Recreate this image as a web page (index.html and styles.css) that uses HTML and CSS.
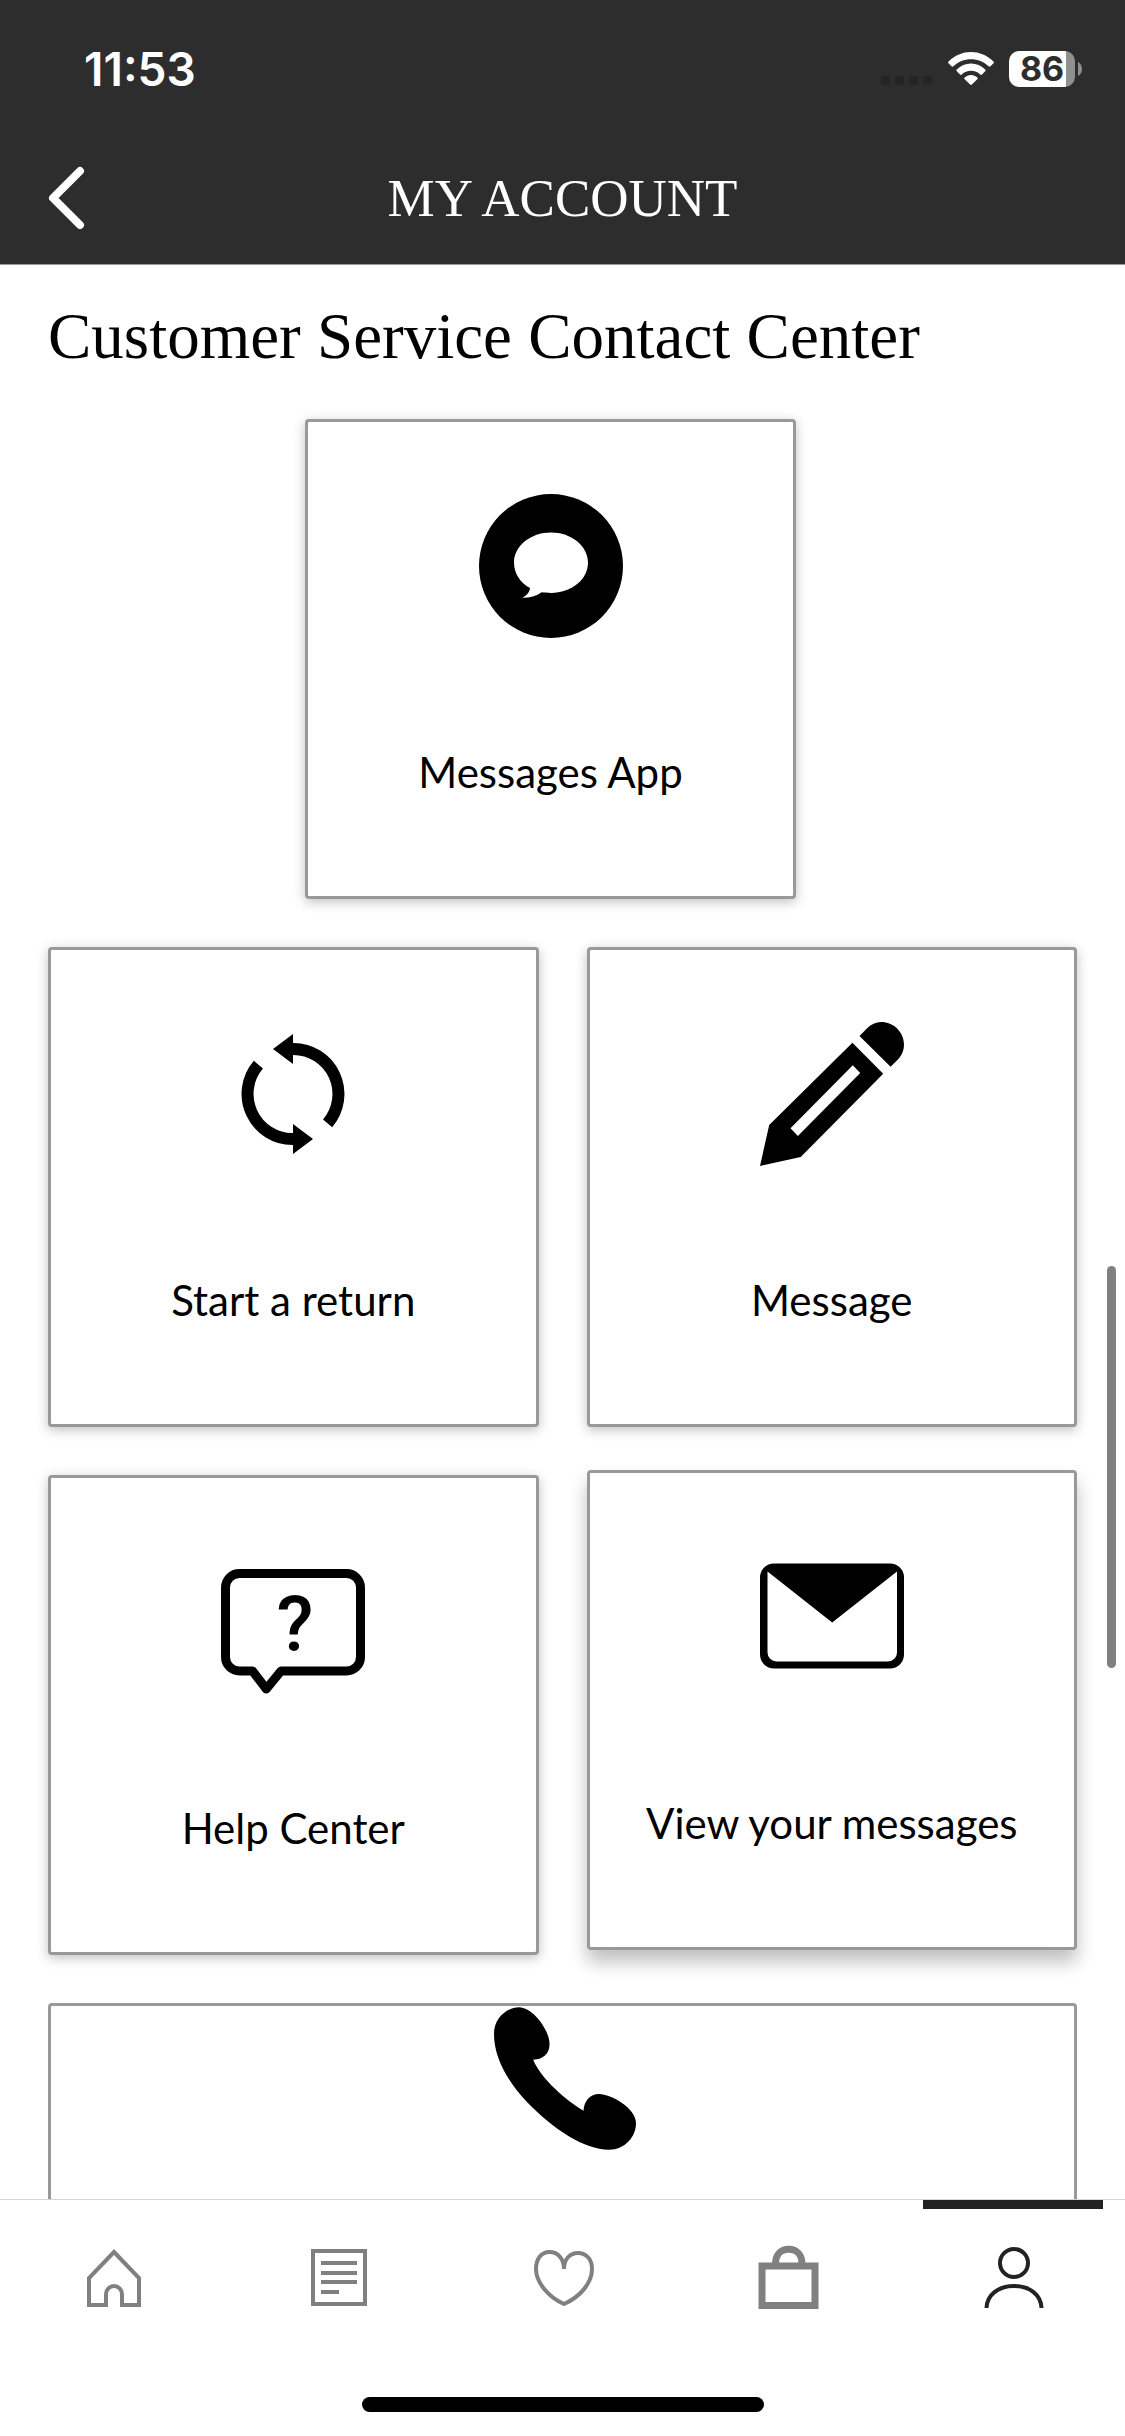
FILE: index.html
```html
<!DOCTYPE html>
<html lang="en">
<head>
    <meta charset="UTF-8">
    <meta name="viewport" content="width=device-width, initial-scale=1.0">
    <title>My Account</title>
    <link rel="stylesheet" href="styles.css">
</head>
<body>
    <header class="header">
        <div class="status-bar">
            <span class="time">11:53</span>
            <div class="status-icons">
                <svg class="signal" viewBox="0 0 52 10" fill="#242424">
                    <rect x="0" width="9" height="9" rx="3"/>
                    <rect x="14" width="9" height="9" rx="3"/>
                    <rect x="28" width="9" height="9" rx="3"/>
                    <rect x="42" width="9" height="9" rx="3"/>
                </svg>
                <svg class="wifi" viewBox="0 0 46 34" fill="#fff">
                    <path d="M.6 9.4C6.700 3.400 14.500 0 23 0s16.300 3.400 22.400 9.400c.7.700.7 1.300.1 1.900l-3 3c-.6.600-1.300.600-1.900 0C35.800 9.800 29.700 7.200 23 7.200S10.200 9.800 5.400 14.300c-.6.600-1.300.600-1.900 0l-3-3c-.6-.6-.6-1.200.1-1.900z"/>
                    <path d="M8.800 17.500C12.600 13.800 17.600 11.600 23 11.600s10.400 2.200 14.200 5.900c.6.600.6 1.200 0 1.800l-3.200 3.200c-.6.600-1.200.6-1.800 0-2.400-2.400-5.600-3.700-9.200-3.700s-6.800 1.300-9.200 3.700c-.6.600-1.200.6-1.800 0l-3.200-3.200c-.6-.6-.6-1.200 0-1.800z"/>
                    <path d="M16.700 25.500c1.700-1.600 3.900-2.500 6.300-2.500s4.600.9 6.300 2.500c.6.600.6 1.200 0 1.700l-5.400 5.400c-.6.600-1.200.6-1.800 0l-5.400-5.400c-.6-.6-.6-1.200 0-1.700z"/>
                </svg>
                <div class="battery">
                    <span class="battery-level">86</span>
                    <svg class="battery-nub" viewBox="0 0 4 14" fill="#8f8f8f"><path d="M0 0c2 1 4 3.500 4 7s-2 6-4 7z"/></svg>
                </div>
            </div>
        </div>
        <div class="title-bar">
            <button class="back" type="button" aria-label="Back">
                <svg viewBox="0 0 36 62" fill="none" stroke="#fff" stroke-width="8" stroke-linecap="round" stroke-linejoin="round"><path d="M32 4L5 31l27 27"/></svg>
            </button>
            <h1 class="title">MY ACCOUNT</h1>
        </div>
    </header>

    <main class="content">
        <h2 class="heading">Customer Service Contact Center</h2>
        <div class="cards">
            <a class="card card-first" href="#">
                <svg class="card-icon" viewBox="0 0 144 144">
                    <circle cx="72" cy="72" r="72"/>
                    <path fill="#fff" d="M72 38.500c20.500 0 37 13.500 37 30.200s-16.500 30.200-37 30.200c-3.500 0-6.500-.1-9.300-.6-5.700 4-12.500 5.700-19.500 5.500 4-2 7.500-5.500 7.800-9.800C41.500 89 35 79.500 35 68.700 35 52 51.500 38.500 72 38.500z"/>
                </svg>
                <span class="card-label">Messages App</span>
            </a>
            <a class="card" href="#">
                <svg class="card-icon" viewBox="0 0 144 144">
                    <g fill="none" stroke="#000" stroke-width="12">
                        <path d="M71 27h1a45 45 0 0 1 34.600 74.300"/>
                        <path d="M73 117h-1a45 45 0 0 1-34.600-74.300"/>
                    </g>
                    <path d="M52 27l20-15v30zM92 117l-20-15v30z"/>
                </svg>
                <span class="card-label">Start a return</span>
            </a>
            <a class="card" href="#">
                <svg class="card-icon" viewBox="0 0 144 144">
                    <path fill-rule="evenodd" d="M0 144l9.200-41L92.400 20.700l30.800 31L40.700 135zM92.800 43.300l-62.300 63 7.400 7.700 62.300-63z"/>
                    <path d="M99.500 14l7.100-7.300C111 2.300 116 0 121 0c12.500 0 23 10 23 22.500 0 6-2.500 11.500-6.600 15.500l-6.800 6.700z"/>
                </svg>
                <span class="card-label">Message</span>
            </a>
            <a class="card" href="#">
                <svg class="card-icon" viewBox="0 0 144 144">
                    <path fill="none" stroke="#000" stroke-width="9" stroke-linejoin="round" d="M18.500 23.500h107a14 14 0 0 1 14 14V107a14 14 0 0 1-14 14H60L45.300 139 31.500 121h-13a14 14 0 0 1-14-14V37.500a14 14 0 0 1 14-14z"/>
                    <text class="question" x="74" y="100" text-anchor="middle">?</text>
                </svg>
                <span class="card-label">Help Center</span>
            </a>
            <a class="card card-raised" href="#">
                <svg class="card-icon" viewBox="0 0 144 144">
                    <path fill-rule="evenodd" d="M14 18.500h116a14 14 0 0 1 14 14v77a14 14 0 0 1-14 14H14a14 14 0 0 1-14-14v-77a14 14 0 0 1 14-14zM7.500 26.500v81a9 9 0 0 0 9 9h111.500a9 9 0 0 0 9-9v-81L72.200 77.500z"/>
                </svg>
                <span class="card-label">View your messages</span>
            </a>
            <a class="card card-wide" href="#" aria-label="Call us">
                <svg class="card-icon" viewBox="0 0 144 144">
                    <path d="M42.200 53.700C53 53 59 47 58.500 37 58 24 42 1.300 28 1.300 17 1.300 3 11 3 28c0 24 14 48 33 68 26 27 57 47.700 82 47.700 16 0 27-12.700 27-26.700C145 102 120 88 108 88c-9 0-15 7-15.500 16.700C76 95 50 73 42.200 53.700z"/>
                </svg>
            </a>
        </div>
        <div class="scroll-thumb"></div>
    </main>

    <nav class="tab-bar">
        <div class="tabs">
            <a class="tab" href="#" aria-label="Home">
                <svg viewBox="0 0 64 64"><path d="M6 59h17V48a8 8 0 0 1 16 0v11h17V32L31 6 6 32z"/></svg>
            </a>
            <a class="tab" href="#" aria-label="News">
                <svg viewBox="0 0 64 64"><path d="M5 5h52v53H5zM13 17h36M13 27h36M13 36h36M13 46h18"/></svg>
            </a>
            <a class="tab" href="#" aria-label="Favorites">
                <svg viewBox="0 0 64 64"><path d="M32 23C32 13 26 6 17.600 6 9 6 4 13 4 23c0 13 12 28 28 35 16-7 28-21 28-35 0-10-6-16-14-16S32 13 32 23"/></svg>
            </a>
            <a class="tab" href="#" aria-label="Bag">
                <svg class="bag" viewBox="0 0 64 64"><path d="M6 20h53v39.500H6zM19.500 18c0-9 5-14.700 13.200-14.700S46 9 46 18"/></svg>
            </a>
            <a class="tab tab-active" href="#" aria-label="Account">
                <svg viewBox="0 0 64 64"><circle cx="33" cy="17" r="14"/><path d="M5.500 62C6 49 17 40 33 40s27 9 27.500 22"/></svg>
            </a>
        </div>
        <div class="home-indicator"></div>
    </nav>
</body>
</html>
```

FILE: styles.css
```css
* {
    box-sizing: border-box;
}
body {
    margin: 0;
    height: 100vh;
    display: flex;
    flex-direction: column;
    overflow: hidden;
    background: #fff;
    color: #000;
    font-family: Lato, sans-serif;
}
svg {
    display: block;
    overflow: visible;
}
a {
    color: inherit;
    text-decoration: none;
}

/* header */
.header {
    flex: none;
    background: #2d2d2d;
    color: #fff;
    border-bottom: 1px solid #999;
}
.status-bar {
    display: flex;
    align-items: center;
    justify-content: space-between;
    padding: 39px 43px 33px 84px;
}
.time {
    font: 600 46px/60px Inter, sans-serif;
}
.status-icons {
    display: flex;
    align-items: center;
    gap: 15px;
}
.signal {
    width: 52px;
    height: 10px;
    margin-top: 24px;
}
.wifi {
    width: 46px;
    height: 34px;
}
.battery {
    display: flex;
    align-items: center;
    gap: 3px;
}
.battery-level {
    width: 66px;
    border-radius: 10px;
    background: linear-gradient(to right, #fff 57px, #8f8f8f 57px);
    color: #2d2d2d;
    font: 700 34px/36px Inter, sans-serif;
    text-align: center;
}
.battery-nub {
    width: 4px;
    height: 14px;
}
.title-bar {
    display: grid;
    grid-template-columns: 1fr auto 1fr;
    align-items: center;
    height: 132px;
    padding: 0 48px;
}
.back {
    justify-self: start;
    padding: 0;
    border: none;
    background: none;
    cursor: pointer;
}
.back svg {
    width: 36px;
    height: 62px;
}
.title {
    margin: 0;
    font: 400 53px/60px "Liberation Serif", serif;
}

/* contact options */
.content {
    position: relative;
    flex: 1;
    min-height: 0;
    overflow: hidden;
    padding: 32px 48px 0;
}
.heading {
    margin: 0 0 44px;
    font: 400 65px/78px "Liberation Serif", serif;
}
.cards {
    display: grid;
    grid-template-columns: 1fr 1fr;
    gap: 48px;
}
.card {
    display: flex;
    flex-direction: column;
    align-items: center;
    gap: 104px;
    padding: 72px 24px 94px;
    border: 3px solid #999;
    border-radius: 4px;
    background: #fff;
    box-shadow: 0 3px 12px rgba(0, 0, 0, 0.25);
}
.card-first {
    grid-column: 1 / -1;
    justify-self: center;
    width: calc(50% - 24px);
    margin-right: 24px;
}
.card-raised,
.card:hover {
    transform: translateY(-5px);
    box-shadow: 0 12px 18px rgba(0, 0, 0, 0.25);
}
.card-wide {
    grid-column: 1 / -1;
    min-height: 480px;
    padding-top: 0;
    box-shadow: none;
}
.card-icon {
    width: 144px;
    height: 144px;
}
.card-label {
    font-size: 42px;
    line-height: 60px;
    white-space: nowrap;
}
.question {
    font: 500 76px Roboto, sans-serif;
}
.scroll-thumb {
    position: absolute;
    top: 1001px;
    right: 9px;
    width: 9px;
    height: 402px;
    border-radius: 5px;
    background: #808080;
}

/* bottom tabs */
.tab-bar {
    flex: none;
    border-top: 1px solid #d4d4d4;
    background: #fff;
    padding-bottom: 24px;
}
.tabs {
    display: flex;
    padding-left: 3px;
}
.tab {
    position: relative;
    flex: 1;
    display: flex;
    justify-content: center;
    padding: 46px 0 87px;
}
.tab svg {
    width: 64px;
    height: 64px;
    fill: none;
    stroke: #808080;
    stroke-width: 4;
}
.tab .bag {
    stroke-width: 7;
}
.tab-active svg {
    stroke: #222;
}
.tab-active::before {
    content: "";
    position: absolute;
    top: 0;
    left: 10%;
    right: 10%;
    height: 9px;
    background: #222;
}
.home-indicator {
    width: 402px;
    height: 15px;
    margin: 0 auto;
    border-radius: 8px;
    background: #000;
}
```
